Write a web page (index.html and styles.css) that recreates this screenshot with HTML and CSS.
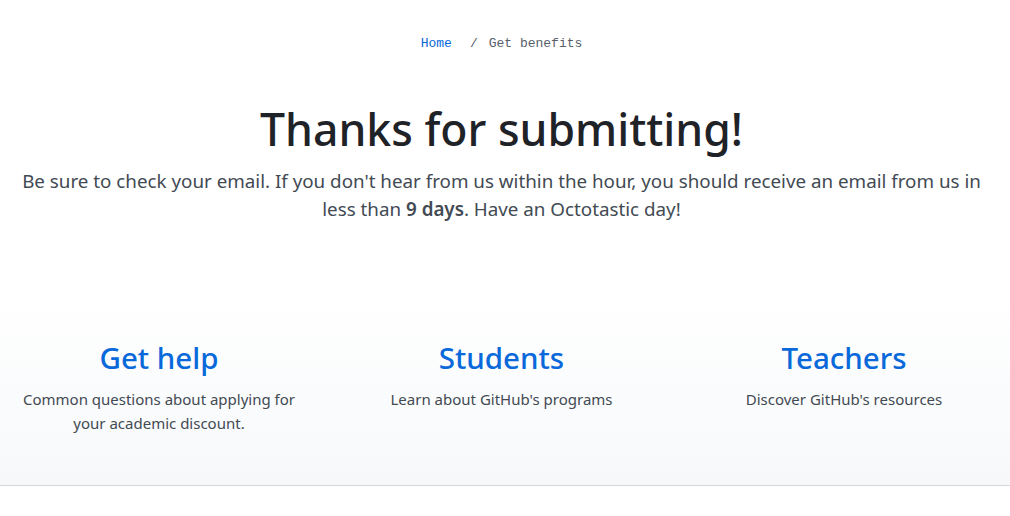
FILE: index.html
```html
<!DOCTYPE html>
<html lang="en">
<head>
<meta charset="utf-8">
<title>Thanks for submitting!</title>
<link rel="stylesheet" href="styles.css">
</head>
<body>
<main class="page">
  <nav class="crumbs" aria-label="Breadcrumb">
    <a class="crumb-link" href="#">Home</a>
    <span class="crumb-sep">/</span>
    <span class="crumb-current">Get benefits</span>
  </nav>
  <header class="hero">
    <h1 class="hero-title">Thanks for submitting!</h1>
    <p class="hero-text">Be sure to check your email. If you don't hear from us within the hour, you should receive an email from us in less than <strong>9 days</strong>. Have an Octotastic day!</p>
  </header>
  <section class="links">
    <div class="links-row">
      <div class="link-col">
        <h2 class="link-title"><a href="#">Get help</a></h2>
        <p class="link-text">Common questions about applying for your academic discount.</p>
      </div>
      <div class="link-col">
        <h2 class="link-title"><a href="#">Students</a></h2>
        <p class="link-text">Learn about GitHub's programs</p>
      </div>
      <div class="link-col">
        <h2 class="link-title"><a href="#">Teachers</a></h2>
        <p class="link-text">Discover GitHub's resources</p>
      </div>
    </div>
  </section>
</main>
</body>
</html>
```

FILE: styles.css
```css
html, body {
  margin: 0;
  padding: 0;
  background: #ffffff;
}

body {
  font-family: "Noto Sans", "Open Sans", sans-serif;
  color: #1f2328;
  overflow: hidden;
}

.page {
  display: flex;
  flex-direction: column;
}

.crumbs {
  display: flex;
  justify-content: center;
  align-items: center;
  margin-top: 34px;
  padding-right: 7px;
  font-family: "Liberation Mono", "DejaVu Sans Mono", monospace;
  font-size: 13px;
  line-height: 20px;
}

.crumb-link {
  color: #0969da;
  text-decoration: none;
}

.crumb-sep {
  color: #57606a;
  margin: 0 11px 0 18px;
}

.crumb-current {
  color: #57606a;
}

.hero {
  text-align: center;
  padding: 0 27px 0 20px;
}

.hero-title {
  margin: 45px 0 0;
  font-size: 44.5px;
  line-height: 60px;
  font-weight: 500;
  color: #1f2328;
}

.hero-text {
  margin: 8px 0 0;
  font-size: 18.8px;
  line-height: 28px;
  color: #424a53;
}

.hero-text strong {
  font-weight: 600;
}

.links {
  margin-top: 72px;
  padding: 43px 7px 50px 0;
  background: linear-gradient(180deg, #ffffff 0%, #f6f8fa 100%);
  border-bottom: 1px solid #d0d7de;
}

.links-row {
  display: grid;
  grid-template-columns: 342px 343px 342px;
  justify-content: center;
}

.link-col {
  text-align: center;
  padding: 0 22px;
}

.link-title {
  margin: 0;
  font-size: 29.5px;
  line-height: 40px;
  font-weight: 500;
}

.link-title a {
  color: #0969da;
  text-decoration: none;
}

.link-text {
  margin: 9px 0 0;
  font-size: 15px;
  line-height: 24px;
  color: #424a53;
}
```
